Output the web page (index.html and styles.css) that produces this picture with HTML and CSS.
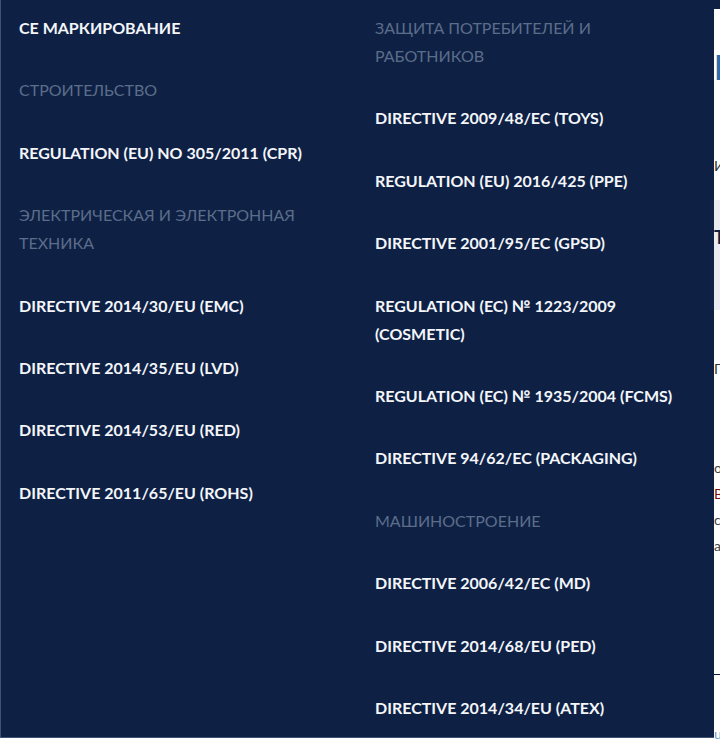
FILE: index.html
```html
<!DOCTYPE html>
<html lang="ru">
<head>
<meta charset="utf-8">
<title>CE маркирование</title>
<link rel="stylesheet" href="styles.css">
</head>
<body>
<div class="page">
  <header class="topbar"></header>
  <main class="content">
    <h1 class="title">Всё о CE</h1>
    <p class="lead">Информация о нормативах и требованиях</p>
    <section class="band">
      <h2 class="band-title">Требования директив</h2>
    </section>
    <p class="para">Продукция должна соответствовать</p>
    <ul class="notes">
      <li>о соответствии</li>
      <li class="red">Внимание</li>
      <li>согласно</li>
      <li>а также</li>
    </ul>
    <div class="rule"></div>
    <p class="link">upravlenie</p>
  </main>

  <nav class="mega">
    <div class="col">
      <a class="item" href="#">CE маркирование</a>
      <span class="group">Строительство</span>
      <a class="item" href="#">Regulation (EU) NO 305/2011 (CPR)</a>
      <span class="group">Электрическая и электронная техника</span>
      <a class="item" href="#">Directive 2014/30/EU (EMC)</a>
      <a class="item" href="#">Directive 2014/35/EU (LVD)</a>
      <a class="item" href="#">Directive 2014/53/EU (RED)</a>
      <a class="item" href="#">Directive 2011/65/EU (ROHS)</a>
    </div>
    <div class="col">
      <span class="group">Защита потребителей и работников</span>
      <a class="item" href="#">Directive 2009/48/EC (TOYS)</a>
      <a class="item" href="#">Regulation (EU) 2016/425 (PPE)</a>
      <a class="item" href="#">Directive 2001/95/EC (GPSD)</a>
      <a class="item" href="#">Regulation (EC) № 1223/2009 (COSMETIC)</a>
      <a class="item" href="#">Regulation (EC) № 1935/2004 (FCMS)</a>
      <a class="item" href="#">Directive 94/62/EC (PACKAGING)</a>
      <span class="group">Машиностроение</span>
      <a class="item" href="#">Directive 2006/42/EC (MD)</a>
      <a class="item" href="#">Directive 2014/68/EU (PED)</a>
      <a class="item" href="#">Directive 2014/34/EU (ATEX)</a>
    </div>
  </nav>
</div>
</body>
</html>
```

FILE: styles.css
```css
* { box-sizing: border-box; }

html, body {
  margin: 0;
  padding: 0;
  background: #ffffff;
  font-family: Lato, "Open Sans", sans-serif;
}

.page {
  position: relative;
  width: 720px;
  height: 740px;
  overflow: hidden;
}

.topbar {
  height: 9px;
  background: #0e2145;
}

.content {
  padding-left: 714px;
  white-space: nowrap;
}

.title {
  margin: 38px 0 0;
  font-size: 34px;
  line-height: 40px;
  color: #2b6cb3;
  font-weight: 700;
}

.lead {
  margin: 70px 0 0;
  font-size: 14px;
  color: #333;
}

.band {
  margin-top: 26px;
  height: 110px;
  background: #e9ecf2;
  padding-top: 26px;
}

.band-title {
  margin: 0;
  font-size: 18px;
  color: #0e2145;
}

.para {
  margin: 50px 0 0;
  font-size: 14px;
  color: #333;
}

.notes {
  list-style: none;
  margin: 78px 0 0;
  padding: 0;
  font-size: 14px;
  line-height: 26px;
  color: #444;
}

.notes .red { color: #7a1010; }

.rule {
  margin-top: 115px;
  height: 1px;
  background: #0e2145;
}

.link {
  margin: 50px 0 0;
  font-size: 14px;
  color: #5aa4d8;
}

/* Mega menu */
.mega {
  position: absolute;
  left: 0;
  top: 0;
  width: 714px;
  height: 738px;
  background: #0e2145;
  border-left: 1px solid #3f5275;
  border-bottom: 1px solid #3f5275;
  display: grid;
  grid-template-columns: 356px 356px;
  padding-left: 18px;
}

.col {
  display: flex;
  flex-direction: column;
}

.item,
.group {
  display: block;
  padding: 14px 40px 20.4px 0;
  font-size: 16px;
  line-height: 28px;
  text-transform: uppercase;
  text-decoration: none;
}

.item {
  color: #f4f6fa;
  font-weight: 700;
}

.group {
  color: #5c6d8a;
  font-weight: 400;
}
```
